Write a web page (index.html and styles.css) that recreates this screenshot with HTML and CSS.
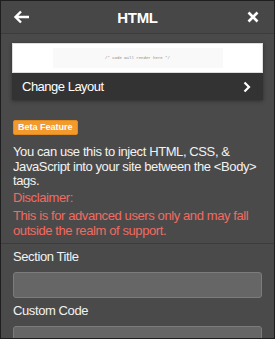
FILE: index.html
```html
<!DOCTYPE html>
<html>
<head>
    <title>HTML</title>
    <link rel="stylesheet" href="styles.css">
</head>
<body>
    <div class="panel">
        <div class="header">
            <span class="icon-btn">
                <svg width="18" height="14" viewBox="0 0 18 14"><path d="M8 1.5 L2.5 7 L8 12.5 M2.5 7 H16" fill="none" stroke="#fff" stroke-width="2.4"/></svg>
            </span>
            <h1>HTML</h1>
            <span class="icon-btn">
                <svg width="12" height="12" viewBox="0 0 12 12"><path d="M1.5 1.5 L10.5 10.5 M10.5 1.5 L1.5 10.5" fill="none" stroke="#fff" stroke-width="2.6"/></svg>
            </span>
        </div>

        <div class="content">
            <div class="layout-card">
                <div class="preview">
                    <div class="preview-inner">/* Code will render here */</div>
                </div>
                <div class="layout-row">
                    <span>Change Layout</span>
                    <svg width="8" height="12" viewBox="0 0 8 12"><path d="M1.5 1.5 L6 6 L1.5 10.5" fill="none" stroke="#fff" stroke-width="2.2"/></svg>
                </div>
            </div>
        </div>

        <div class="info">
            <span class="badge">Beta Feature</span>
            <p class="desc">You can use this to inject HTML, CSS, &amp; JavaScript into your site between the &lt;Body&gt; tags.</p>
            <p class="warn">Disclaimer:</p>
            <p class="warn warn-text">This is for advanced users only and may fall outside the realm of support.</p>
        </div>

        <div class="fields">
            <div class="form-group">
                <label for="section-title">Section Title</label>
                <input type="text" id="section-title">
            </div>
            <div class="form-group">
                <label for="custom-code">Custom Code</label>
                <input type="text" id="custom-code">
            </div>
        </div>
    </div>
</body>
</html>
```

FILE: styles.css
```css
html, body {
    margin: 0;
    padding: 0;
}
body {
    font-family: "Liberation Sans", Arial, sans-serif;
    color: #fff;
    background-color: #4a4a4a;
}
.panel {
    width: 275px;
    height: 339px;
    box-sizing: border-box;
    border: 1px solid #1e1e1e;
    background-color: #4a4a4a;
    overflow: hidden;
}
.header {
    height: 32px;
    display: flex;
    align-items: center;
    justify-content: space-between;
    padding: 0 12px 0 12px;
    border-bottom: 1px solid #3c3c3c;
    background-color: #474747;
}
.header h1 {
    margin: 0;
    font-size: 15px;
    font-weight: bold;
    letter-spacing: -0.3px;
}
.icon-btn {
    display: flex;
    align-items: center;
    width: 18px;
    justify-content: center;
}
.content {
    padding: 9px 11px 9px 11px;
}
.layout-card {
    background-color: #333;
    box-shadow: 0 1px 4px rgba(0,0,0,0.4);
}
.preview {
    height: 28px;
    background-color: #fff;
    border: 1px solid #ddd;
    display: flex;
    align-items: center;
    justify-content: center;
}
.preview-inner {
    width: 170px;
    height: 20px;
    background-color: #f9f9f9;
    font-family: "Liberation Mono", monospace;
    font-size: 4px;
    color: #888;
    display: flex;
    align-items: center;
    justify-content: center;
}
.layout-row {
    height: 27px;
    display: flex;
    align-items: center;
    justify-content: space-between;
    padding: 0 12px 0 10px;
    font-size: 13px;
    letter-spacing: -0.5px;
}
.info {
    padding: 11px 12px 5px 12px;
    border-bottom: 1px solid #3c3c3c;
}
.badge {
    display: block;
    width: fit-content;
    background-color: #f39a2c;
    color: #fff;
    font-size: 9px;
    line-height: 11px;
    font-weight: bold;
    padding: 1px 4px;
    border-radius: 2px;
    border: 1px solid #e08a20;
}
.desc {
    margin: 10px 0 0 0;
    font-size: 13px;
    line-height: 14.5px;
    letter-spacing: -0.4px;
    color: #f2f2f2;
}
.warn {
    margin: 2.5px 0 0 0;
    font-size: 13px;
    line-height: 14.5px;
    letter-spacing: -0.4px;
    color: #f26a61;
}
.warn-text {
    margin-top: 3.5px;
}
.fields {
    padding: 5px 12px 0 12px;
}
.form-group {
    margin-bottom: 5.5px;
}
label {
    display: block;
    font-size: 13px;
    line-height: 15px;
    letter-spacing: -0.4px;
    color: #f2f2f2;
    margin-bottom: 7.5px;
}
input[type="text"] {
    display: block;
    width: 100%;
    height: 26px;
    box-sizing: border-box;
    background-color: #666;
    border: 1px solid #7c7c7c;
    border-radius: 3px;
}
```
